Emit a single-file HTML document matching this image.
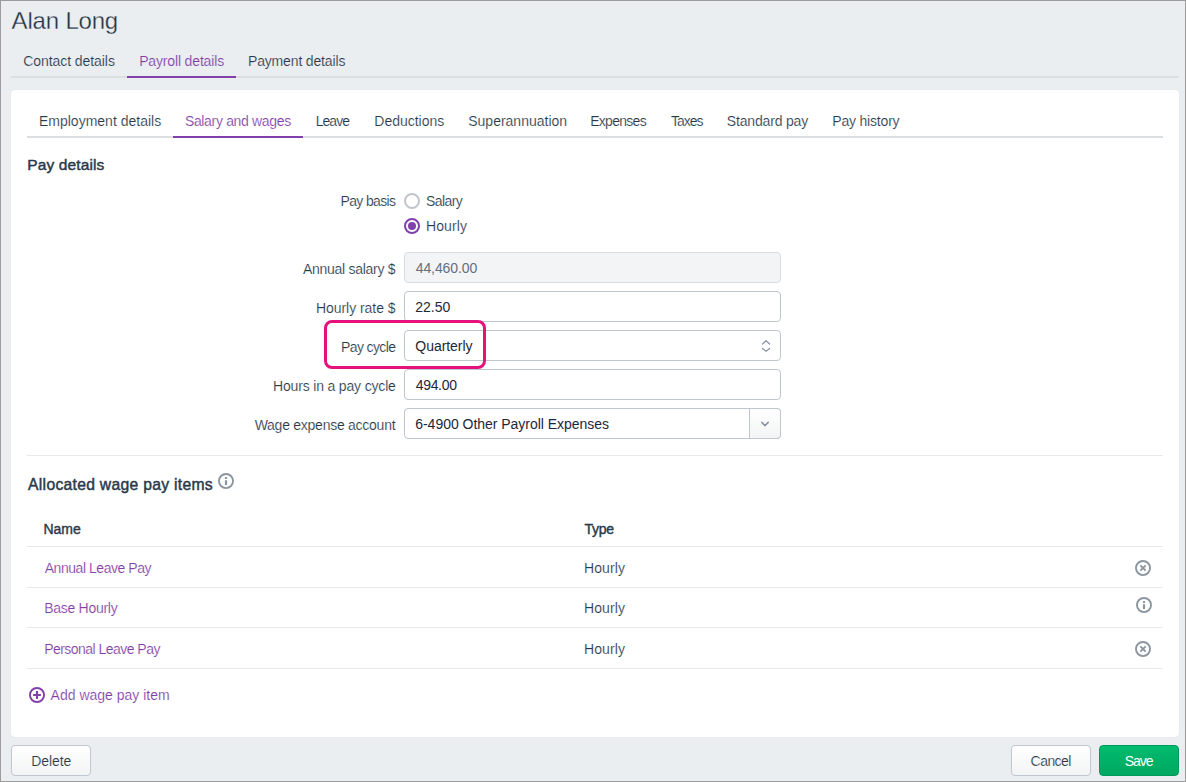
<!DOCTYPE html>
<html><head><meta charset="utf-8"><title>Alan Long</title>
<style>
html,body{margin:0;padding:0}
body{width:1186px;height:782px;position:relative;overflow:hidden;background:#ebeef1;font-family:"Liberation Sans",sans-serif;}
.t{position:absolute;white-space:pre;line-height:1;font-family:"Liberation Sans",sans-serif;}
.abs{position:absolute;box-sizing:border-box}
.frame{left:0;top:0;width:1186px;height:782px;border:1px solid #9c9c9c;z-index:50;pointer-events:none}
.card{left:11px;top:90px;width:1168px;height:647px;background:#fff;border-radius:4px;box-shadow:0 0 1px rgba(46,62,79,.12)}
.hl{background:#dcdfe2}
.pl{background:#8241aa}
.inp{left:404px;width:377px;height:31px;border:1px solid #c0c6cd;border-radius:4px;background:#fff}
.rowl{left:27px;width:1136px;height:1px;background:#e7e9ec}
.btn{top:745px;height:31px;border-radius:4px;border:1px solid #c0c6cd;background:linear-gradient(#ffffff,#f3f4f5)}

</style></head>
<body>
<div class="abs card"></div>
<div class="abs hl" style="left:11px;top:76px;width:1168px;height:2px"></div>
<div class="abs pl" style="left:127px;top:76px;width:109px;height:2px"></div>
<div class="abs hl" style="left:27px;top:136px;width:1136px;height:2px"></div>
<div class="abs pl" style="left:173px;top:136px;width:130px;height:2px"></div>

<!-- radios -->
<svg class="abs" style="left:403px;top:192px" width="18" height="18" viewBox="0 0 18 18"><circle cx="9" cy="9" r="7" fill="#fff" stroke="#c0c6cc" stroke-width="2"/></svg>
<svg class="abs" style="left:403px;top:217px" width="18" height="18" viewBox="0 0 18 18"><circle cx="9" cy="9" r="7" fill="#fff" stroke="#8241aa" stroke-width="2"/><circle cx="9" cy="9" r="4" fill="#8241aa"/></svg>

<!-- inputs -->
<div class="abs inp" style="top:252px;background:#f3f4f5;border-color:#d9dce0"></div>
<div class="abs inp" style="top:291px"></div>
<div class="abs inp" style="top:330px"></div>
<div class="abs inp" style="top:369px"></div>
<div class="abs inp" style="top:408px"></div>
<div class="abs" style="left:749px;top:408px;width:32px;height:31px;border:1px solid #c0c6cd;border-radius:0 4px 4px 0;background:linear-gradient(#ffffff,#f3f4f5)"></div>
<svg class="abs" style="left:757px;top:336px" width="18" height="20" viewBox="0 0 18 20" fill="none" stroke="#8a96a3" stroke-width="1.25" stroke-linecap="round" stroke-linejoin="round"><path d="M5.5 8 L9.05 4.7 L12.6 8"/><path d="M5.5 12.5 L9.05 15.3 L12.6 12.5"/></svg>
<svg class="abs" style="left:757px;top:416px" width="16" height="16" viewBox="0 0 16 16" fill="none" stroke="#8a96a3" stroke-width="1.5" stroke-linecap="round" stroke-linejoin="round"><path d="M4.8 6.4 L8 9.6 L11.2 6.4"/></svg>

<!-- pink highlight -->
<div class="abs" style="left:324px;top:320px;width:162px;height:49px;border:3px solid #e5127d;border-radius:8px;z-index:5"></div>

<div class="abs rowl" style="top:455px"></div>
<div class="abs rowl" style="top:546px"></div>
<div class="abs rowl" style="top:587px"></div>
<div class="abs rowl" style="top:627px"></div>
<div class="abs rowl" style="top:668px"></div>

<!-- info icon heading -->
<svg class="abs" style="left:217px;top:472px" width="18" height="18" viewBox="0 0 18 18" fill="none"><circle cx="9" cy="9" r="7.05" stroke="#8b959f" stroke-width="1.85"/><rect x="7.9" y="5.1" width="2.2" height="1.9" fill="#8b959f"/><rect x="7.9" y="8.25" width="2.2" height="4.8" fill="#8b959f"/></svg>
<!-- row icons -->
<svg class="abs" style="left:1134px;top:559px" width="18" height="18" viewBox="0 0 18 18" fill="none" stroke="#8b959f"><circle cx="9" cy="9" r="7.05" stroke-width="1.85"/><path d="M6.35 6.35L11.65 11.65M11.65 6.35L6.35 11.65" stroke-width="1.85"/></svg>
<svg class="abs" style="left:1135px;top:595.9px" width="18" height="18" viewBox="0 0 18 18" fill="none"><circle cx="9" cy="9" r="7.05" stroke="#8b959f" stroke-width="1.85"/><rect x="7.9" y="5.1" width="2.2" height="1.9" fill="#8b959f"/><rect x="7.9" y="8.25" width="2.2" height="4.8" fill="#8b959f"/></svg>
<svg class="abs" style="left:1134px;top:640px" width="18" height="18" viewBox="0 0 18 18" fill="none" stroke="#8b959f"><circle cx="9" cy="9" r="7.05" stroke-width="1.85"/><path d="M6.35 6.35L11.65 11.65M11.65 6.35L6.35 11.65" stroke-width="1.85"/></svg>
<!-- plus icon -->
<svg class="abs" style="left:28px;top:685.9px" width="18" height="18" viewBox="0 0 18 18" fill="none" stroke="#8241aa"><circle cx="9" cy="9" r="7.05" stroke-width="1.9"/><path d="M9 5.1V12.9M5.1 9H12.9" stroke-width="2.1"/></svg>

<!-- buttons -->
<div class="abs btn" style="left:11px;width:80px"></div>
<div class="abs btn" style="left:1011px;width:80px"></div>
<div class="abs btn" style="left:1099px;width:80px;border-color:#00995b;background:linear-gradient(#00bb6e,#00a862)"></div>

<div class="abs frame"></div>

<span class="t thin" style="left:11.61px;top:9px;font-size:24px;font-weight:400;color:#243241;letter-spacing:-0.186px;-webkit-text-stroke:0.3px #ebeef1">Alan Long</span>
<span class="t thin" style="left:23.16px;top:54px;font-size:14px;font-weight:400;color:#293949;letter-spacing:-0.060px;-webkit-text-stroke:0.15px #ebeef1">Contact details</span>
<span class="t thin" style="left:139.15px;top:54px;font-size:14px;font-weight:400;color:#7f3ea8;letter-spacing:-0.152px;-webkit-text-stroke:0.15px #ebeef1">Payroll details</span>
<span class="t thin" style="left:247.96px;top:54px;font-size:14px;font-weight:400;color:#293949;letter-spacing:-0.154px;-webkit-text-stroke:0.15px #ebeef1">Payment details</span>
<span class="t thin" style="left:38.96px;top:114px;font-size:14px;font-weight:400;color:#293949;letter-spacing:0.002px;-webkit-text-stroke:0.15px #ffffff">Employment details</span>
<span class="t thin" style="left:184.89px;top:114px;font-size:14px;font-weight:400;color:#7f3ea8;letter-spacing:-0.330px;-webkit-text-stroke:0.15px #ffffff">Salary and wages</span>
<span class="t thin" style="left:315.73px;top:114px;font-size:14px;font-weight:400;color:#293949;letter-spacing:-0.960px;-webkit-text-stroke:0.15px #ffffff">Leave</span>
<span class="t thin" style="left:374.37px;top:114px;font-size:14px;font-weight:400;color:#293949;letter-spacing:-0.017px;-webkit-text-stroke:0.15px #ffffff">Deductions</span>
<span class="t thin" style="left:468.26px;top:114px;font-size:14px;font-weight:400;color:#293949;letter-spacing:-0.004px;-webkit-text-stroke:0.15px #ffffff">Superannuation</span>
<span class="t thin" style="left:590.15px;top:114px;font-size:14px;font-weight:400;color:#293949;letter-spacing:-0.708px;-webkit-text-stroke:0.15px #ffffff">Expenses</span>
<span class="t thin" style="left:671.03px;top:114px;font-size:14px;font-weight:400;color:#293949;letter-spacing:-1.002px;-webkit-text-stroke:0.15px #ffffff">Taxes</span>
<span class="t thin" style="left:726.79px;top:114px;font-size:14px;font-weight:400;color:#293949;letter-spacing:-0.167px;-webkit-text-stroke:0.15px #ffffff">Standard pay</span>
<span class="t thin" style="left:832.25px;top:114px;font-size:14px;font-weight:400;color:#293949;letter-spacing:-0.190px;-webkit-text-stroke:0.15px #ffffff">Pay history</span>
<span class="t semi" style="left:27.27px;top:157px;font-size:15.5px;font-weight:400;color:#293949;letter-spacing:0.125px;-webkit-text-stroke:0.45px currentColor">Pay details</span>
<span class="t thin" style="left:340.54px;top:194px;font-size:14px;font-weight:400;color:#293949;letter-spacing:-0.655px;-webkit-text-stroke:0.15px #ffffff">Pay basis</span>
<span class="t thin" style="left:426.08px;top:194px;font-size:14px;font-weight:400;color:#293949;letter-spacing:-0.614px;-webkit-text-stroke:0.15px #ffffff">Salary</span>
<span class="t thin" style="left:425.96px;top:219px;font-size:14px;font-weight:400;color:#293949;letter-spacing:0.123px;-webkit-text-stroke:0.15px #ffffff">Hourly</span>
<span class="t thin" style="left:302.98px;top:262px;font-size:14px;font-weight:400;color:#293949;letter-spacing:-0.279px;-webkit-text-stroke:0.15px #ffffff">Annual salary $</span>
<span class="t thin" style="left:315.96px;top:301px;font-size:14px;font-weight:400;color:#293949;letter-spacing:-0.049px;-webkit-text-stroke:0.15px #ffffff">Hourly rate $</span>
<span class="t thin" style="left:341.01px;top:340px;font-size:14px;font-weight:400;color:#293949;letter-spacing:-0.618px;-webkit-text-stroke:0.15px #ffffff">Pay cycle</span>
<span class="t thin" style="left:273.01px;top:379px;font-size:14px;font-weight:400;color:#293949;letter-spacing:-0.167px;-webkit-text-stroke:0.15px #ffffff">Hours in a pay cycle</span>
<span class="t thin" style="left:254.66px;top:418px;font-size:14px;font-weight:400;color:#293949;letter-spacing:-0.257px;-webkit-text-stroke:0.15px #ffffff">Wage expense account</span>
<span class="t" style="left:415.68px;top:261px;font-size:14px;font-weight:400;color:#63707d;letter-spacing:-0.081px">44,460.00</span>
<span class="t" style="left:415.35px;top:300px;font-size:14px;font-weight:400;color:#1c2838;letter-spacing:-0.051px">22.50</span>
<span class="t" style="left:415.34px;top:339px;font-size:14px;font-weight:400;color:#1c2838;letter-spacing:-0.055px">Quarterly</span>
<span class="t" style="left:415.68px;top:378px;font-size:14px;font-weight:400;color:#1c2838;letter-spacing:-0.308px">494.00</span>
<span class="t" style="left:415.23px;top:417px;font-size:14px;font-weight:400;color:#1c2838;letter-spacing:-0.024px">6-4900 Other Payroll Expenses</span>
<span class="t semi" style="left:28.08px;top:477px;font-size:15.7px;font-weight:400;color:#293949;letter-spacing:0.288px;-webkit-text-stroke:0.45px currentColor">Allocated wage pay items</span>
<span class="t semi" style="left:43.52px;top:522px;font-size:14px;font-weight:400;color:#293949;letter-spacing:-0.034px;-webkit-text-stroke:0.4px currentColor">Name</span>
<span class="t semi" style="left:584.55px;top:522px;font-size:14px;font-weight:400;color:#293949;letter-spacing:-0.246px;-webkit-text-stroke:0.4px currentColor">Type</span>
<span class="t thin" style="left:44.71px;top:561px;font-size:14px;font-weight:400;color:#7f3ea8;letter-spacing:-0.450px;-webkit-text-stroke:0.15px #ffffff">Annual Leave Pay</span>
<span class="t thin" style="left:44.15px;top:601px;font-size:14px;font-weight:400;color:#7f3ea8;letter-spacing:-0.272px;-webkit-text-stroke:0.15px #ffffff">Base Hourly</span>
<span class="t thin" style="left:44.15px;top:642px;font-size:14px;font-weight:400;color:#7f3ea8;letter-spacing:-0.533px;-webkit-text-stroke:0.15px #ffffff">Personal Leave Pay</span>
<span class="t thin" style="left:583.96px;top:561px;font-size:14px;font-weight:400;color:#293949;letter-spacing:0.116px;-webkit-text-stroke:0.15px #ffffff">Hourly</span>
<span class="t thin" style="left:583.96px;top:601px;font-size:14px;font-weight:400;color:#293949;letter-spacing:0.116px;-webkit-text-stroke:0.15px #ffffff">Hourly</span>
<span class="t thin" style="left:583.96px;top:642px;font-size:14px;font-weight:400;color:#293949;letter-spacing:0.116px;-webkit-text-stroke:0.15px #ffffff">Hourly</span>
<span class="t thin" style="left:50.62px;top:688px;font-size:14px;font-weight:400;color:#7f3ea8;letter-spacing:0.001px;-webkit-text-stroke:0.15px #ffffff">Add wage pay item</span>
<span class="t thin" style="left:31.15px;top:754px;font-size:14px;font-weight:400;color:#293949;letter-spacing:-0.073px;-webkit-text-stroke:0.15px #f9fafa">Delete</span>
<span class="t thin" style="left:1030.60px;top:754px;font-size:14px;font-weight:400;color:#293949;letter-spacing:-0.553px;-webkit-text-stroke:0.15px #f9fafa">Cancel</span>
<span class="t" style="left:1124.64px;top:754px;font-size:14px;font-weight:400;color:#ffffff;letter-spacing:-0.967px">Save</span>
</body></html>
